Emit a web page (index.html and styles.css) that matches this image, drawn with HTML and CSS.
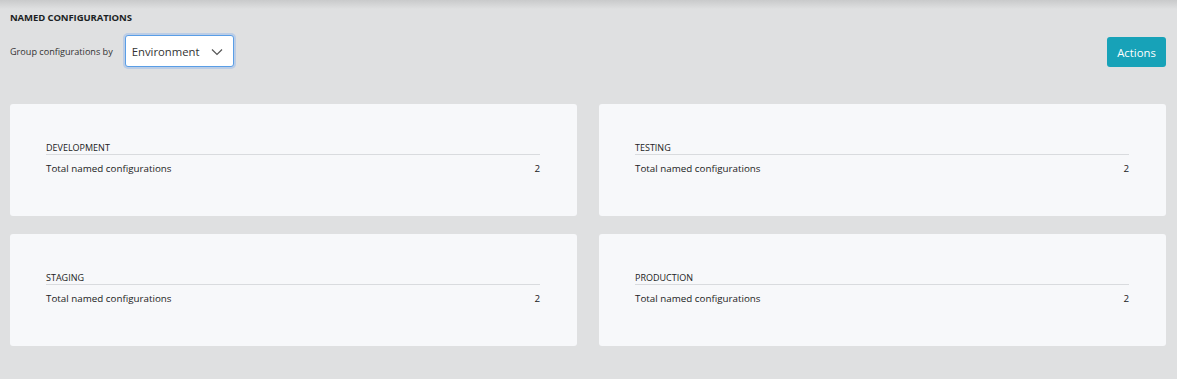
FILE: index.html
```html
<!DOCTYPE html>
<html lang="en">
<head>
    <meta charset="UTF-8">
    <meta name="viewport" content="width=device-width, initial-scale=1.0">
    <title>Named configurations</title>
    <link rel="stylesheet" href="styles.css">
</head>
<body>
    <div class="page">
        <h1 class="title">NAMED CONFIGURATIONS</h1>

        <div class="toolbar">
            <div class="group-by">
                <span class="group-label">Group configurations by</span>
                <div class="select">
                    <span>Environment</span>
                    <svg class="chevron" width="12" height="8" viewBox="0 0 12 8">
                        <path d="M1 1.5 L6 6.5 L11 1.5" fill="none" stroke="#555" stroke-width="1.2"/>
                    </svg>
                </div>
            </div>
            <button class="btn-actions">Actions</button>
        </div>

        <div class="cards">
            <div class="card">
                <div class="card-head">DEVELOPMENT</div>
                <div class="card-row"><span>Total named configurations</span><span>2</span></div>
            </div>
            <div class="card">
                <div class="card-head">TESTING</div>
                <div class="card-row"><span>Total named configurations</span><span>2</span></div>
            </div>
            <div class="card">
                <div class="card-head">STAGING</div>
                <div class="card-row"><span>Total named configurations</span><span>2</span></div>
            </div>
            <div class="card">
                <div class="card-head">PRODUCTION</div>
                <div class="card-row"><span>Total named configurations</span><span>2</span></div>
            </div>
        </div>
    </div>
</body>
</html>
```

FILE: styles.css
```css
html, body {
    margin: 0;
    padding: 0;
}
body {
    font-family: "Open Sans", Arial, sans-serif;
    background-color: #dfe0e1;
    color: #222;
    height: 379px;
    overflow: hidden;
}
.page {
    background: linear-gradient(#c9cacb, #dfe0e1 9px);
    background-repeat: no-repeat;
    background-size: 100% 12px;
    padding: 12px 11px 0 10px;
}
.title {
    font-size: 9.5px;
    font-weight: 700;
    margin: 0;
    line-height: 12px;
    color: #1c1f24;
    letter-spacing: -0.1px;
}
.toolbar {
    display: flex;
    justify-content: space-between;
    align-items: center;
    margin-top: 11px;
}
.group-by {
    display: flex;
    align-items: center;
}
.group-label {
    font-size: 9.1px;
    color: #333;
    margin-right: 12px;
}
.select {
    box-sizing: border-box;
    width: 109px;
    height: 32px;
    background: #fff;
    border: 1px solid #5a9ee6;
    border-radius: 3px;
    box-shadow: 0 0 0 2px rgba(120, 170, 240, 0.35);
    display: flex;
    align-items: center;
    justify-content: space-between;
    padding: 0 10px 0 6px;
    font-size: 11.3px;
    color: #333;
}
.chevron {
    margin-top: 1px;
}
.btn-actions {
    font-family: inherit;
    font-size: 11.3px;
    color: #fff;
    background: #17a2b8;
    border: none;
    border-radius: 3px;
    width: 59px;
    height: 30px;
    padding: 0;
    margin-top: 2px;
}
.cards {
    display: grid;
    grid-template-columns: 1fr 1fr;
    column-gap: 22px;
    row-gap: 18px;
    margin-top: 37px;
}
.card {
    background: #f7f8fa;
    border-radius: 3px;
    height: 112px;
    box-sizing: border-box;
    padding: 37px 37px 0 36px;
}
.card-head {
    font-size: 9px;
    color: #222;
    line-height: 13px;
    padding-bottom: 0;
    border-bottom: 1px solid #d9dbde;
}
.card-row {
    display: flex;
    justify-content: space-between;
    font-size: 9.8px;
    color: #222;
    margin-top: 7px;
}
```
